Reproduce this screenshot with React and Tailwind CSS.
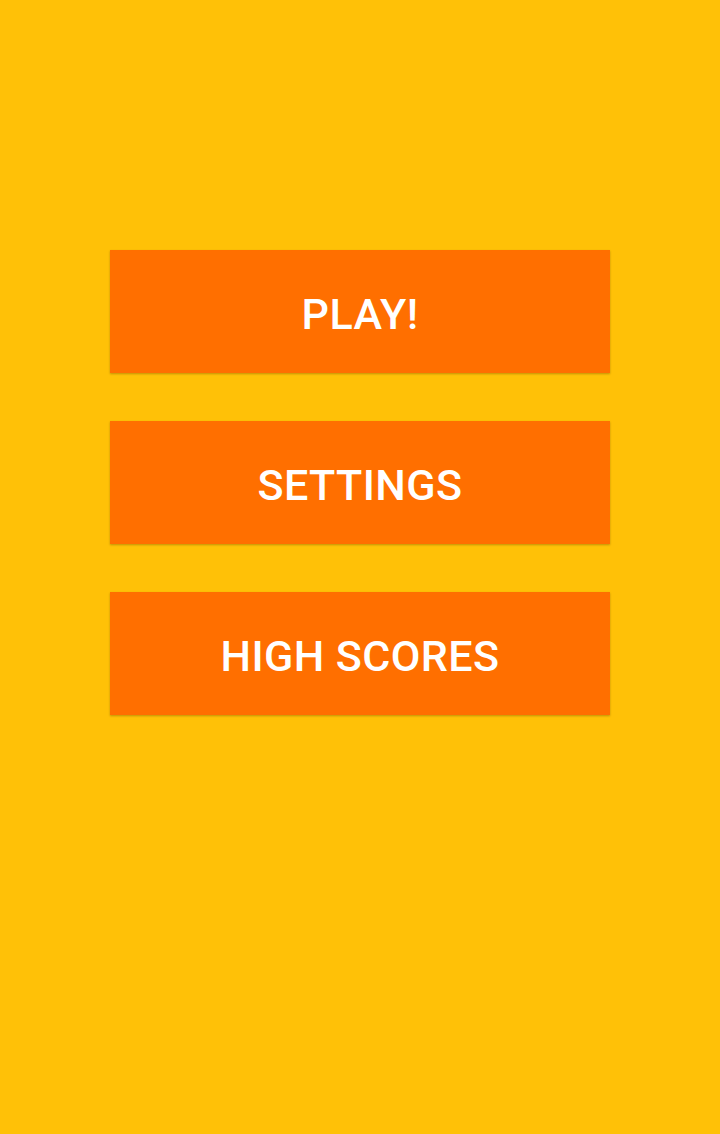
const MenuButton = ({ label }) => (
  <button
    type="button"
    className="w-[500px] h-[123px] pt-[6px] bg-[#ff6f00] text-white text-[43px] font-medium tracking-[0.01em] shadow-[0_1px_2px_rgba(0,0,0,0.25)] flex items-center justify-center"
  >
    {label}
  </button>
);

export default function App() {
  return (
    <div
      className="w-[720px] h-[1134px] bg-[#ffc107] flex flex-col items-center pt-[250px] gap-[48px]"
      style={{ fontFamily: 'Roboto, "Noto Sans", sans-serif' }}
    >
      <MenuButton label="PLAY!" />
      <MenuButton label="SETTINGS" />
      <MenuButton label="HIGH SCORES" />
    </div>
  );
}
